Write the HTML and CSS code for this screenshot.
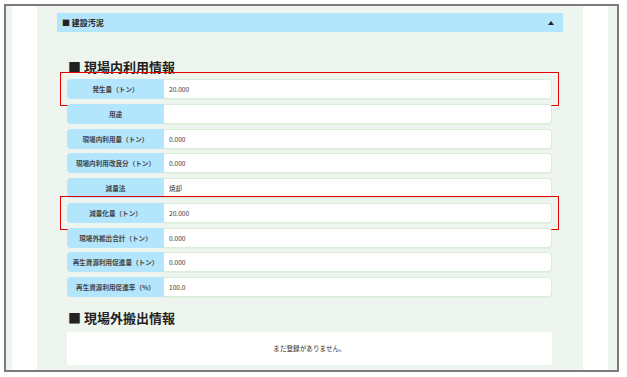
FILE: index.html
```html
<!DOCTYPE html>
<html lang="ja">
<head>
    <meta charset="UTF-8">
    <meta name="viewport" content="width=device-width, initial-scale=1.0">
    <title>建設汚泥</title>
    <link rel="stylesheet" href="styles.css">
</head>
<body>
    <div class="frame">
        <div class="edge"></div>
        <div class="gutter"></div>
        <main class="panel">
            <div class="bar">
                <span>■ 建設汚泥</span>
                <svg class="caret" width="6" height="4" viewBox="0 0 6 4"><polygon points="0,4 3,0 6,4" fill="#222"/></svg>
            </div>

            <div class="section">
                <h2>■ 現場内利用情報</h2>
                <div class="rows">
                    <div class="mark">
                        <div class="row"><div class="label">発生量（トン）</div><div class="value">20.000</div></div>
                    </div>
                    <div class="row"><div class="label">用途</div><div class="value"></div></div>
                    <div class="row"><div class="label">現場内利用量（トン）</div><div class="value">0.000</div></div>
                    <div class="row"><div class="label">現場内利用改良分（トン）</div><div class="value">0.000</div></div>
                    <div class="row"><div class="label">減量法</div><div class="value">焼却</div></div>
                    <div class="mark">
                        <div class="row"><div class="label">減量化量（トン）</div><div class="value">20.000</div></div>
                    </div>
                    <div class="row"><div class="label">現場外搬出合計（トン）</div><div class="value">0.000</div></div>
                    <div class="row"><div class="label">再生資源利用促進量（トン）</div><div class="value">0.000</div></div>
                    <div class="row"><div class="label">再生資源利用促進率（%）</div><div class="value">100.0</div></div>
                </div>

                <h2 class="second">■ 現場外搬出情報</h2>
                <div class="empty">まだ登録がありません。</div>
            </div>
        </main>
        <div class="gutter"></div>
        <div class="edge"></div>
    </div>
</body>
</html>
```

FILE: styles.css
```css
body { margin: 0; background: #fff; font-family: "Noto Sans CJK JP", "Noto Sans", sans-serif; color: #333; }
.frame { display: grid; grid-template-columns: 6px 25px 546px 25px 9px; width: 611px; height: 364px; margin: 4px 0 0 4px; border: 2px solid #7b7b7b; overflow: hidden; }
.edge { background: #eef5ee; }
.gutter { background: #fff; }
.panel { background: #eef5ee; padding: 7px 20px 0; }

.bar { display: flex; align-items: center; justify-content: space-between; height: 19px; padding: 0 9px 0 5px; background: #b3e5fc; font-size: 8px; font-weight: bold; color: #222; }
.caret { display: block; }

.section { padding: 27px 11px 0 10px; }
h2 { margin: 0; font-size: 13px; line-height: 16px; font-weight: bold; color: #222; padding-left: 1px; }
.second { margin-top: 13px; }

.rows { display: flex; flex-direction: column; gap: 4.75px; margin-top: 4px; }
.row { display: flex; height: 20px; font-size: 6.6px; line-height: 20px; }
.label { width: 97px; flex: none; background: #b3e5fc; border-radius: 4px 0 0 4px; text-align: center; font-weight: bold; color: #444; }
.value { flex: 1; background: #fff; border: 1px solid #d9edd9; border-left: none; border-radius: 0 4px 4px 0; padding-left: 5px; line-height: 18px; box-shadow: 0 1px 0 #e2efe2; }

.mark { margin: -7px -7px -7px; padding: 6px; border: 1px solid #e60000; }

.empty { margin-top: 6px; height: 33px; background: #fff; font-size: 6.6px; line-height: 33px; text-align: center; border-radius: 2px; }
```
